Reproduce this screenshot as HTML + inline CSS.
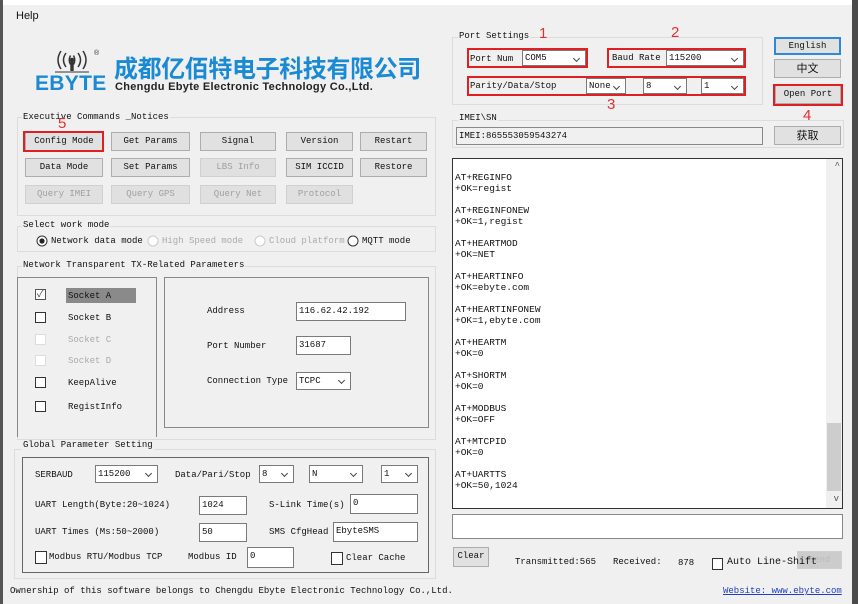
<!DOCTYPE html>
<html><head><meta charset="utf-8"><style>
*{box-sizing:border-box;margin:0;padding:0}
body{width:858px;height:604px;overflow:hidden;background:#f0f0f0;position:relative;font-family:"Liberation Mono","Noto Sans CJK SC",monospace;font-size:9px;color:#111}
.a{position:absolute;white-space:nowrap}
.btn{position:absolute;background:#e1e1e1;border:1px solid #adadad;text-align:center;font-size:9px;line-height:17px}
.dis{color:#a0a0a0;background:#e0e0e0;border-color:#d0d0d0}
.grp{position:absolute;border:1px solid #dcdcdc}
.lbl{position:absolute;background:#f0f0f0;padding:0 1px;font-size:9px;line-height:10px}
.in{position:absolute;background:#fff;border:1px solid #7a7a7a;font-size:9px;line-height:16px;padding-left:2px}
.sel{position:absolute;background:#fff;border:1px solid #7a7a7a;font-size:9px;line-height:16px;padding-left:2px}
.sel:after{content:"";position:absolute;right:6px;top:5px;width:4px;height:4px;border-right:1px solid #444;border-bottom:1px solid #444;transform:rotate(45deg)}
.red{position:absolute;border:2px solid #e02020}
.num{position:absolute;color:#e03030;font-family:"Liberation Sans",sans-serif;font-size:15px;line-height:15px}
.cb{position:absolute;width:11px;height:11px;border:1px solid #333;background:#fff}
.out div{height:11px;line-height:11px;font-size:9.5px}
</style></head><body>
<div class="a" style="left:0;top:0;width:858px;height:5px;background:#fff"></div>
<div class="a" style="left:0;top:0;width:3px;height:604px;background:#555"></div>
<div class="a" style="left:852px;top:0;width:6px;height:604px;background:#4a4a4a"></div>
<div class="a" style="left:16px;top:10px;font-family:'Liberation Sans',sans-serif;font-size:11px">Help</div>

<!-- logo -->
<svg class="a" style="left:52px;top:46px" width="52" height="32" viewBox="0 0 52 32">
<g fill="none" stroke="#333" stroke-width="1.5">
<path d="M9 5 Q3 14 9 23"/><path d="M14 7 Q9 14 14 21"/><path d="M18.5 9.5 Q16 14 18.5 18.5"/>
<path d="M31 5 Q37 14 31 23"/><path d="M26 7 Q31 14 26 21"/><path d="M21.5 9.5 Q24 14 21.5 18.5"/></g>
<circle cx="20" cy="14" r="2.3" fill="#333"/><rect x="18.3" y="16" width="3.4" height="9" fill="#333"/>
<line x1="3" y1="26" x2="37" y2="26" stroke="#333"/>
<text x="42" y="9" font-size="7" fill="#333" font-family="Liberation Sans">®</text></svg>
<div class="a" style="left:35px;top:73px;font-family:'Liberation Sans',sans-serif;font-weight:bold;font-size:21px;line-height:22px;color:#1a8ad4;letter-spacing:0.3px">EBYTE</div>
<div class="a" style="left:114px;top:52px;font-family:'Noto Sans CJK SC',sans-serif;font-weight:bold;font-size:24px;line-height:30px;color:#1a8ad4;letter-spacing:-0.4px">成都亿佰特电子科技有限公司</div>
<div class="a" style="left:115px;top:81px;font-family:'Liberation Sans',sans-serif;font-weight:bold;font-size:11px;color:#222;letter-spacing:0.3px">Chengdu Ebyte Electronic Technology Co.,Ltd.</div>

<!-- Executive commands -->
<div class="grp" style="left:17px;top:117px;width:419px;height:99px"></div>
<div class="lbl" style="left:22px;top:112px">Executive Commands _Notices</div>
<div class="btn" style="left:25px;top:132px;width:78px;height:19px">Config Mode</div>
<div class="red" style="left:23px;top:131px;width:81px;height:21px"></div>
<div class="num" style="left:58px;top:116px">5</div>
<div class="btn" style="left:111px;top:132px;width:79px;height:19px">Get Params</div>
<div class="btn" style="left:200px;top:132px;width:76px;height:19px">Signal</div>
<div class="btn" style="left:286px;top:132px;width:67px;height:19px">Version</div>
<div class="btn" style="left:360px;top:132px;width:67px;height:19px">Restart</div>
<div class="btn" style="left:25px;top:158px;width:78px;height:19px">Data Mode</div>
<div class="btn" style="left:111px;top:158px;width:79px;height:19px">Set Params</div>
<div class="btn dis" style="left:200px;top:158px;width:76px;height:19px">LBS Info</div>
<div class="btn" style="left:286px;top:158px;width:67px;height:19px">SIM ICCID</div>
<div class="btn" style="left:360px;top:158px;width:67px;height:19px">Restore</div>
<div class="btn dis" style="left:25px;top:185px;width:78px;height:19px">Query IMEI</div>
<div class="btn dis" style="left:111px;top:185px;width:79px;height:19px">Query GPS</div>
<div class="btn dis" style="left:200px;top:185px;width:76px;height:19px">Query Net</div>
<div class="btn dis" style="left:286px;top:185px;width:67px;height:19px">Protocol</div>

<!-- work mode -->
<div class="grp" style="left:17px;top:226px;width:419px;height:26px"></div>
<div class="lbl" style="left:22px;top:220px">Select work mode</div>
<svg class="a" style="left:36px;top:235px" width="12" height="12"><circle cx="6" cy="6" r="5" fill="#fff" stroke="#333"/><circle cx="6" cy="6" r="2.6" fill="#222"/></svg>
<div class="a" style="left:51px;top:236px">Network data mode</div>
<svg class="a" style="left:147px;top:235px" width="12" height="12"><circle cx="6" cy="6" r="5" fill="#fff" stroke="#ccc"/></svg>
<div class="a" style="left:162px;top:236px;color:#aaa">High Speed mode</div>
<svg class="a" style="left:254px;top:235px" width="12" height="12"><circle cx="6" cy="6" r="5" fill="#fff" stroke="#ccc"/></svg>
<div class="a" style="left:269px;top:236px;color:#aaa">Cloud platform</div>
<svg class="a" style="left:347px;top:235px" width="12" height="12"><circle cx="6" cy="6" r="5" fill="#fff" stroke="#333"/></svg>
<div class="a" style="left:362px;top:236px">MQTT mode</div>

<!-- network params -->
<div class="grp" style="left:17px;top:266px;width:419px;height:174px"></div>
<div class="lbl" style="left:22px;top:260px">Network Transparent TX-Related Parameters</div>
<div class="a" style="left:17px;top:277px;width:140px;height:160px;border-top:1px solid #888;border-right:1px solid #888;border-left:1px solid #888"></div>
<div class="a" style="left:164px;top:277px;width:265px;height:151px;border:1px solid #888"></div>
<div class="cb" style="left:35px;top:289px;border-color:#555"></div>
<div class="a" style="left:37px;top:285px;font-size:10px;color:#444">✓</div>
<div class="a" style="left:66px;top:288px;width:70px;height:15px;background:#8a8a8a"></div>
<div class="a" style="left:68px;top:291px">Socket A</div>
<div class="cb" style="left:35px;top:312px"></div><div class="a" style="left:68px;top:313px">Socket B</div>
<div class="cb" style="left:35px;top:334px;border-color:#ddd"></div><div class="a" style="left:68px;top:335px;color:#aaa">Socket C</div>
<div class="cb" style="left:35px;top:355px;border-color:#ddd"></div><div class="a" style="left:68px;top:356px;color:#aaa">Socket D</div>
<div class="cb" style="left:35px;top:377px"></div><div class="a" style="left:68px;top:378px">KeepAlive</div>
<div class="cb" style="left:35px;top:401px"></div><div class="a" style="left:68px;top:402px">RegistInfo</div>
<div class="a" style="left:207px;top:306px">Address</div>
<div class="in" style="left:296px;top:302px;width:110px;height:19px">116.62.42.192</div>
<div class="a" style="left:207px;top:341px">Port Number</div>
<div class="in" style="left:296px;top:336px;width:55px;height:19px">31687</div>
<div class="a" style="left:207px;top:376px">Connection Type</div>
<div class="sel" style="left:296px;top:372px;width:55px;height:18px">TCPC</div>

<!-- global -->
<div class="grp" style="left:14px;top:449px;width:422px;height:130px"></div>
<div class="lbl" style="left:22px;top:440px">Global Parameter Setting</div>
<div class="a" style="left:22px;top:457px;width:407px;height:116px;border:1px solid #666"></div>
<div class="a" style="left:35px;top:470px">SERBAUD</div>
<div class="sel" style="left:95px;top:465px;width:63px;height:18px">115200</div>
<div class="a" style="left:175px;top:470px">Data/Pari/Stop</div>
<div class="sel" style="left:259px;top:465px;width:35px;height:18px">8</div>
<div class="sel" style="left:309px;top:465px;width:54px;height:18px">N</div>
<div class="sel" style="left:381px;top:465px;width:37px;height:18px">1</div>
<div class="a" style="left:35px;top:500px">UART Length(Byte:20~1024)</div>
<div class="in" style="left:199px;top:496px;width:48px;height:19px">1024</div>
<div class="a" style="left:269px;top:500px">S-Link Time(s)</div>
<div class="in" style="left:350px;top:494px;width:68px;height:20px">0</div>
<div class="a" style="left:35px;top:527px">UART Times (Ms:50~2000)</div>
<div class="in" style="left:199px;top:523px;width:48px;height:19px">50</div>
<div class="a" style="left:269px;top:527px">SMS CfgHead</div>
<div class="in" style="left:333px;top:522px;width:85px;height:20px">EbyteSMS</div>
<div class="cb" style="left:35px;top:551px;width:12px;height:13px"></div>
<div class="a" style="left:49px;top:552px">Modbus RTU/Modbus TCP</div>
<div class="a" style="left:188px;top:552px">Modbus ID</div>
<div class="in" style="left:247px;top:547px;width:47px;height:21px">0</div>
<div class="cb" style="left:331px;top:552px;width:12px;height:13px"></div>
<div class="a" style="left:346px;top:553px">Clear Cache</div>

<div class="a" style="left:10px;top:586px">Ownership of this software belongs to Chengdu Ebyte Electronic Technology Co.,Ltd.</div>
<div class="a" style="left:723px;top:586px;color:#2040c0;text-decoration:underline">Website: www.ebyte.com</div>

<!-- Port settings -->
<div class="grp" style="left:452px;top:37px;width:311px;height:68px"></div>
<div class="lbl" style="left:458px;top:31px">Port Settings</div>
<div class="num" style="left:539px;top:26px">1</div>
<div class="num" style="left:671px;top:25px">2</div>
<div class="num" style="left:607px;top:97px">3</div>
<div class="num" style="left:803px;top:108px">4</div>
<div class="a" style="left:470px;top:54px">Port Num</div>
<div class="sel" style="left:522px;top:50px;width:64px;height:16px;line-height:14px">COM5</div>
<div class="red" style="left:467px;top:48px;width:121px;height:20px"></div>
<div class="a" style="left:612px;top:53px">Baud Rate</div>
<div class="sel" style="left:666px;top:50px;width:78px;height:16px;line-height:14px">115200</div>
<div class="red" style="left:607px;top:48px;width:139px;height:20px"></div>
<div class="a" style="left:470px;top:81px">Parity/Data/Stop</div>
<div class="sel" style="left:586px;top:78px;width:40px;height:16px;line-height:14px">None</div>
<div class="sel" style="left:643px;top:78px;width:44px;height:16px;line-height:14px">8</div>
<div class="sel" style="left:701px;top:78px;width:43px;height:16px;line-height:14px">1</div>
<div class="red" style="left:467px;top:76px;width:279px;height:20px"></div>
<div class="btn" style="left:774px;top:37px;width:67px;height:18px;border:2px solid #2e8ad8;line-height:14px">English</div>
<div class="btn" style="left:774px;top:59px;width:67px;height:19px;font-family:'Noto Sans CJK SC',sans-serif;font-size:11px;line-height:17px">中文</div>
<div class="btn" style="left:775px;top:85px;width:66px;height:19px">Open Port</div>
<div class="red" style="left:773px;top:84px;width:70px;height:22px"></div>

<div class="grp" style="left:452px;top:120px;width:392px;height:28px"></div>
<div class="lbl" style="left:458px;top:113px">IMEI\SN</div>
<div class="a" style="left:456px;top:127px;width:307px;height:18px;border:1px solid #888;background:#f0f0f0;line-height:16px;padding-left:2px">IMEI:865553059543274</div>
<div class="btn" style="left:774px;top:126px;width:67px;height:19px;font-family:'Noto Sans CJK SC',sans-serif;font-size:11px">获取</div>

<!-- output -->
<div class="a" style="left:452px;top:158px;width:391px;height:351px;border:1px solid #333;background:#fff;overflow:hidden">
<div class="out" style="position:absolute;left:2px;top:13px">
<div>AT+REGINFO</div><div>+OK=regist</div><div></div>
<div>AT+REGINFONEW</div><div>+OK=1,regist</div><div></div>
<div>AT+HEARTMOD</div><div>+OK=NET</div><div></div>
<div>AT+HEARTINFO</div><div>+OK=ebyte.com</div><div></div>
<div>AT+HEARTINFONEW</div><div>+OK=1,ebyte.com</div><div></div>
<div>AT+HEARTM</div><div>+OK=0</div><div></div>
<div>AT+SHORTM</div><div>+OK=0</div><div></div>
<div>AT+MODBUS</div><div>+OK=OFF</div><div></div>
<div>AT+MTCPID</div><div>+OK=0</div><div></div>
<div>AT+UARTTS</div><div>+OK=50,1024</div>
</div>
<div style="position:absolute;right:0;top:0;width:16px;height:349px;background:#f0f0f0"></div>
<div style="position:absolute;right:1px;top:264px;width:14px;height:68px;background:#cdcdcd"></div>
<div style="position:absolute;right:2px;top:2px;font-size:9px;color:#555">^</div>
<div style="position:absolute;right:3px;top:335px;font-size:9px;color:#555">v</div>
</div>
<div class="a" style="left:452px;top:514px;width:391px;height:25px;border:1px solid #888;background:#fff"></div>

<div class="btn" style="left:453px;top:547px;width:36px;height:20px;line-height:16px">Clear</div>
<div class="a" style="left:515px;top:557px">Transmitted:565</div>
<div class="a" style="left:613px;top:557px">Received:</div>
<div class="a" style="left:678px;top:558px">878</div>
<div class="btn dis" style="left:797px;top:551px;width:45px;height:18px;color:#bbb;background:#ccc">Send</div>
<div class="cb" style="left:712px;top:558px;width:11px;height:12px"></div>
<div class="a" style="left:727px;top:557px;font-size:10px">Auto Line-Shift</div>
</body></html>
